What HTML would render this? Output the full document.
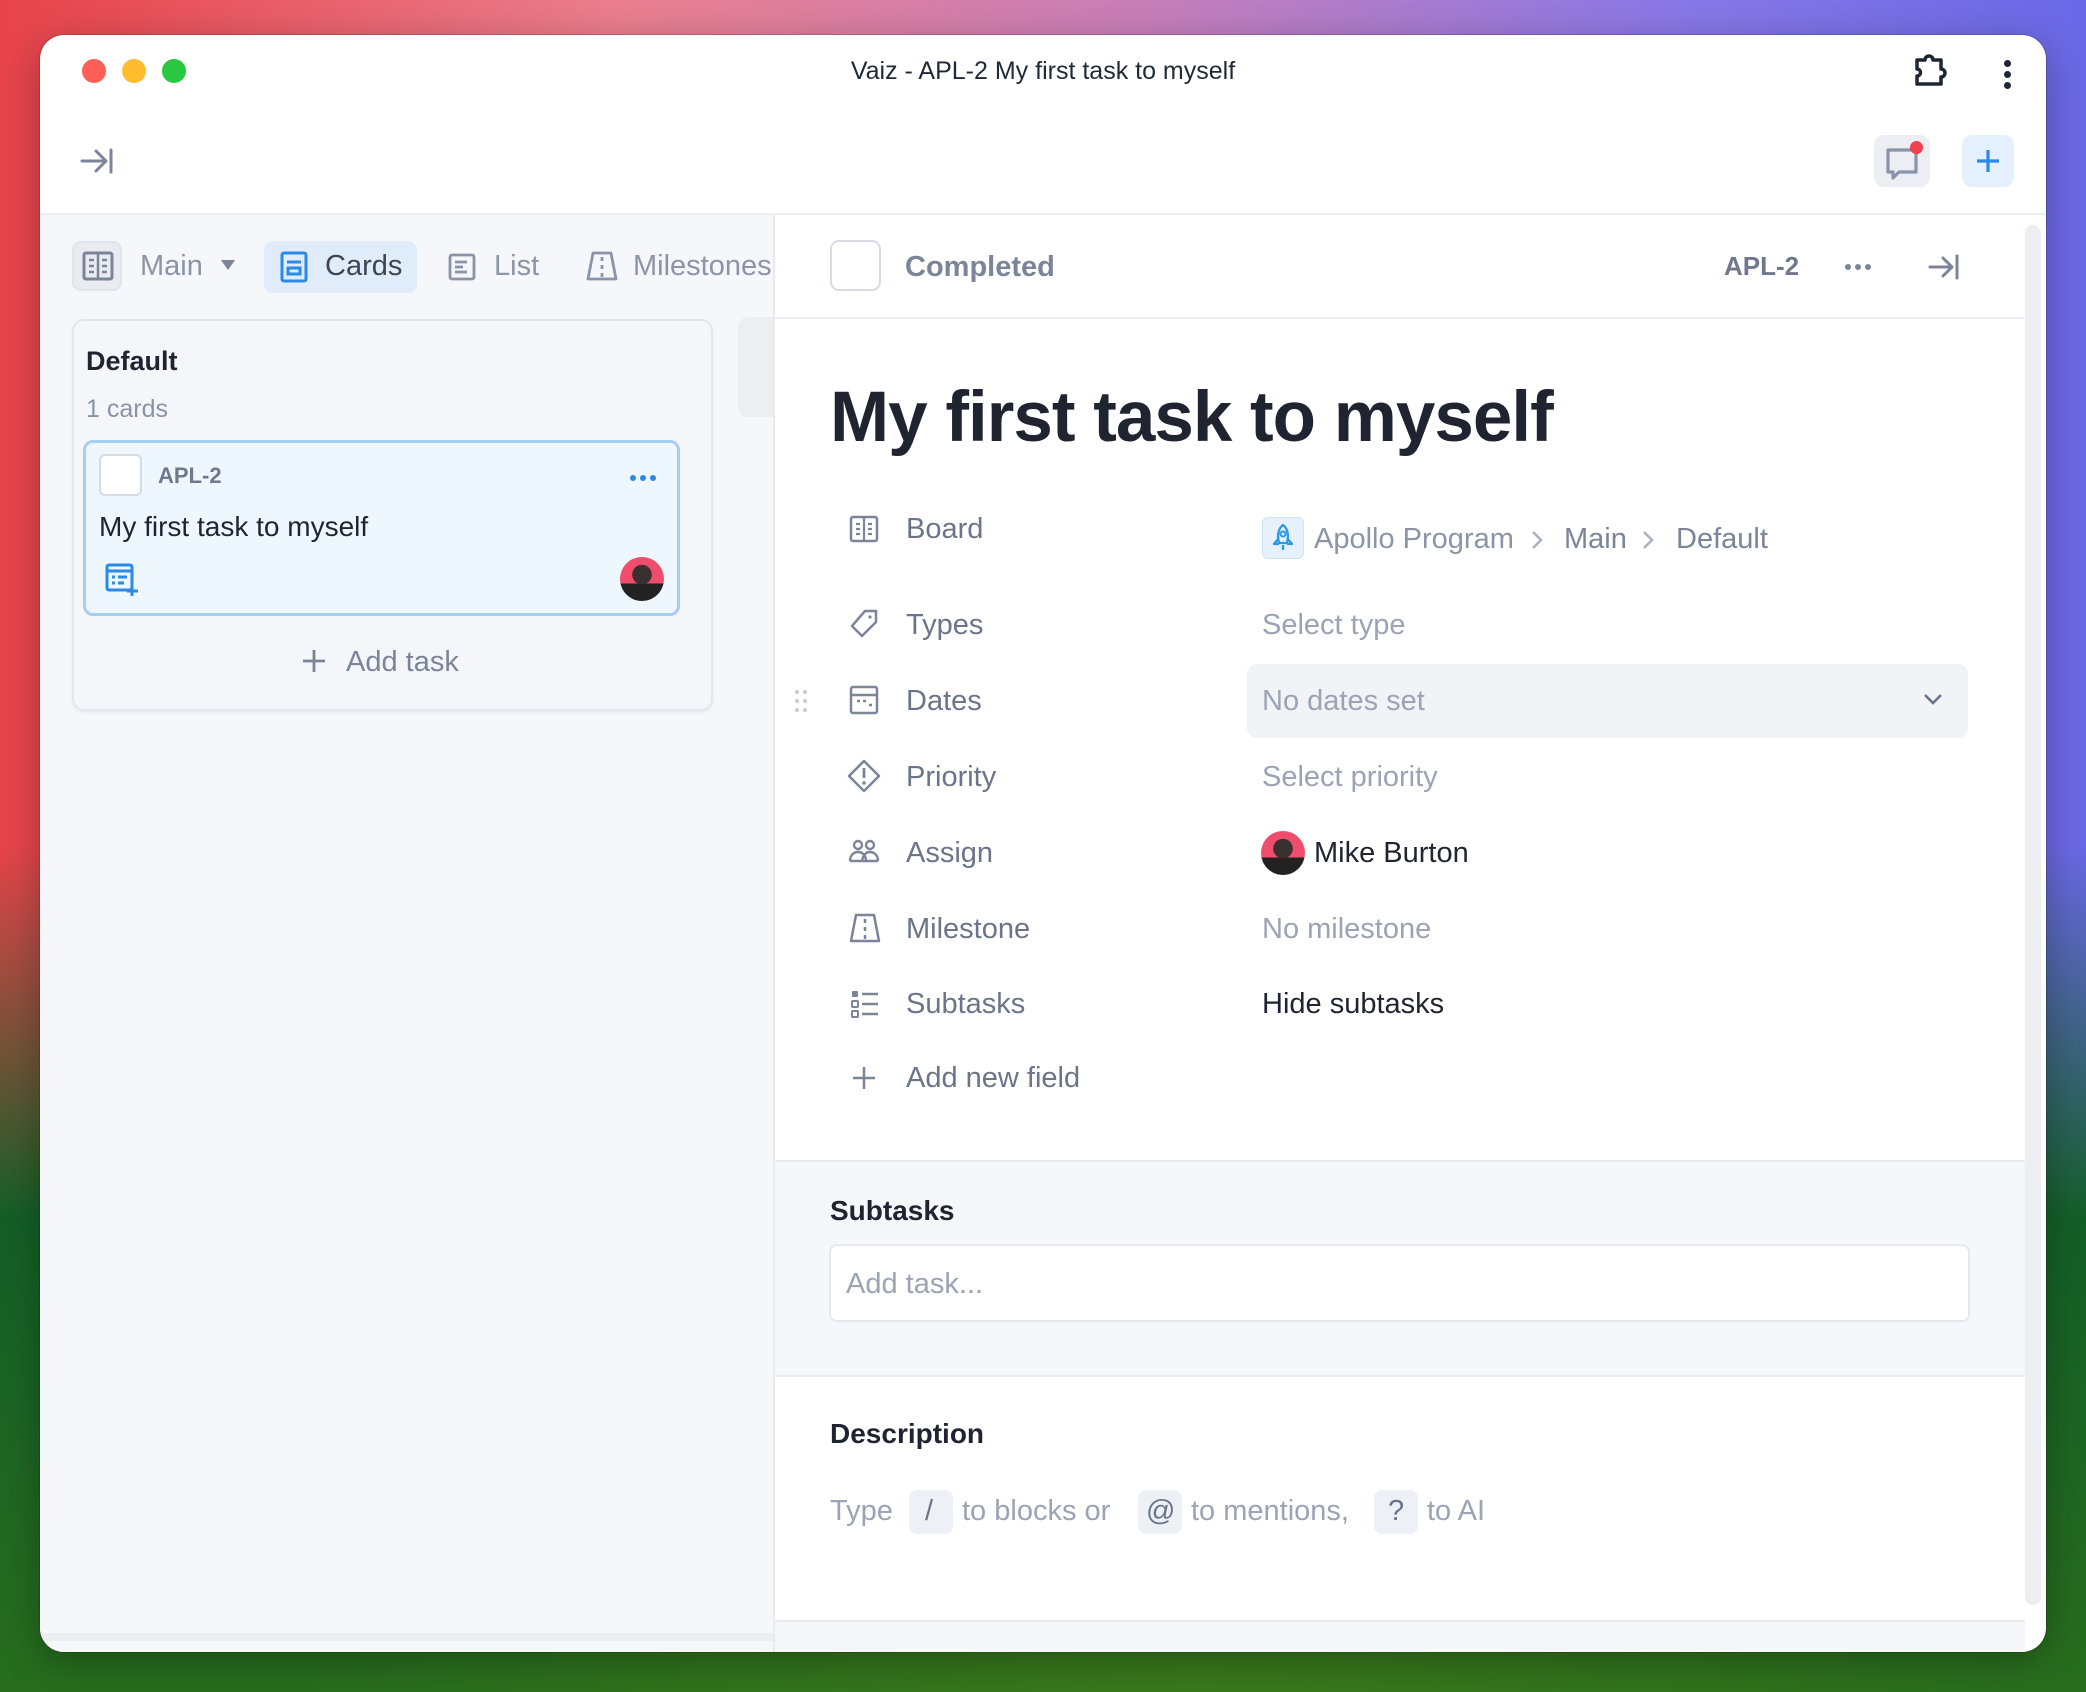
<!DOCTYPE html>
<html><head><meta charset="utf-8"><style>
*{box-sizing:border-box;margin:0;padding:0}
body{width:2086px;height:1692px;overflow:hidden;font-family:"Liberation Sans",sans-serif;position:relative;
background:
radial-gradient(ellipse 900px 700px at 1200px 1750px,#3c7a1c 0%,rgba(60,122,28,0) 100%),
linear-gradient(to bottom,rgba(0,0,0,0) 0%,rgba(0,0,0,0) 50%,rgba(20,95,40,1) 72%,rgba(40,110,30,1) 100%),
linear-gradient(to right,#e8434a 0%,#ea7f90 30%,#c77fb9 55%,#8a78e6 80%,#6a68e6 100%);}
.a{position:absolute}
.win{position:absolute;left:40px;top:35px;width:2006px;height:1617px;background:#fff;border-radius:24px;overflow:hidden;box-shadow:0 0 0 1px rgba(0,0,0,.15),0 10px 40px rgba(0,0,0,.3)}
.t{position:absolute;white-space:nowrap;line-height:1}
.lbl{color:#6b7489;font-size:29px}
.val{color:#9ba3b4;font-size:29px}
svg{position:absolute;overflow:visible}
</style></head><body>
<div class="win">
 <div class="a" style="left:42px;top:24px;width:24px;height:24px;border-radius:50%;background:#fe5f57"></div>
 <div class="a" style="left:82px;top:24px;width:24px;height:24px;border-radius:50%;background:#febc2e"></div>
 <div class="a" style="left:122px;top:24px;width:24px;height:24px;border-radius:50%;background:#28c840"></div>
 <div class="t" style="left:0;width:2006px;text-align:center;top:24px;font-size:25px;color:#1f2937">Vaiz - APL-2 My first task to myself</div>
 <svg style="left:1872px;top:18px" width="36" height="36" viewBox="0 0 36 36"><path d="M5 7h8a4 4 0 0 1 8 0h8v9a4 4 0 0 1 0 8v7H5v-8a3.5 3.5 0 0 0 0-7z" fill="none" stroke="#1e2533" stroke-width="3.5" stroke-linejoin="round"/></svg>
 <div class="a" style="left:1964px;top:25px;width:7px;height:7px;border-radius:50%;background:#1e2533"></div>
 <div class="a" style="left:1964px;top:36px;width:7px;height:7px;border-radius:50%;background:#1e2533"></div>
 <div class="a" style="left:1964px;top:47px;width:7px;height:7px;border-radius:50%;background:#1e2533"></div>
 <svg style="left:40px;top:112px" width="34" height="28" viewBox="0 0 34 28"><path d="M2 14h24M16 4l10 10-10 10M31 3v22" fill="none" stroke="#7b8499" stroke-width="3" stroke-linecap="round" stroke-linejoin="round"/></svg>
 <div class="a" style="left:1834px;top:100px;width:56px;height:52px;border-radius:10px;background:#eceef3"></div>
 <svg style="left:1845px;top:112px" width="36" height="34" viewBox="0 0 36 34"><path d="M3 3h28v22H14l-6 6v-6H3z" fill="none" stroke="#8a93a8" stroke-width="3.2" stroke-linejoin="round"/></svg>
 <div class="a" style="left:1870px;top:106px;width:13px;height:13px;border-radius:50%;background:#f0404a"></div>
 <div class="a" style="left:1922px;top:100px;width:52px;height:52px;border-radius:10px;background:#e4f0fd"></div>
 <svg style="left:1935px;top:113px" width="26" height="26" viewBox="0 0 26 26"><path d="M13 2v22M2 13h22" stroke="#2a8ae6" stroke-width="3.2"/></svg>
 <div class="a" style="left:0;top:178px;width:2006px;height:2px;background:#eceef2"></div>
 <div class="a" style="left:0;top:180px;width:733px;height:1437px;background:#f6f7fa"></div>
 <div class="a" style="left:32px;top:206px;width:50px;height:50px;border-radius:9px;background:#e9ebf0;border:2px solid #e1e4ea"></div>
 <svg style="left:42px;top:216px" width="32" height="30" viewBox="0 0 32 30"><rect x="2" y="2" width="28" height="26" rx="2" fill="none" stroke="#7b8499" stroke-width="3"/><path d="M16 2v26M7 9h5M7 15h5M7 21h5M20 9h5M20 15h5M20 21h5" stroke="#7b8499" stroke-width="2.5"/></svg>
 <div class="t lbl" style="left:100px;top:217px;color:#8c94a6">Main</div>
 <svg style="left:180px;top:224px" width="16" height="12" viewBox="0 0 16 12"><path d="M1 1h14L8 11z" fill="#7b8499"/></svg>
 <div class="a" style="left:224px;top:206px;width:153px;height:52px;border-radius:9px;background:#e0ecf9"></div>
 <svg style="left:240px;top:216px" width="28" height="32" viewBox="0 0 28 32"><rect x="2" y="2" width="24" height="28" rx="2" fill="none" stroke="#2a8ae6" stroke-width="3"/><path d="M7 11h14M8 17h12v6H8z" fill="none" stroke="#2a8ae6" stroke-width="3"/></svg>
 <div class="t" style="left:285px;top:217px;font-size:29px;color:#3d4555">Cards</div>
 <svg style="left:408px;top:218px" width="28" height="28" viewBox="0 0 28 28"><rect x="2" y="2" width="24" height="24" rx="2" fill="none" stroke="#8a93a8" stroke-width="2.8"/><path d="M7 9h12M7 14h8M7 19h12" stroke="#8a93a8" stroke-width="2.8"/></svg>
 <div class="t" style="left:454px;top:217px;font-size:29px;color:#8c94a6">List</div>
 <svg style="left:546px;top:216px" width="32" height="30" viewBox="0 0 32 30"><path d="M2 28L7 2h18l5 26zM16 6v4M16 14v4M16 22v4" fill="none" stroke="#8a93a8" stroke-width="2.8" stroke-linejoin="round"/></svg>
 <div class="t" style="left:593px;top:217px;font-size:29px;color:#8c94a6">Milestones</div>
 <div class="a" style="left:733px;top:180px;width:2px;height:1440px;background:#e8eaee"></div>
 <div class="a" style="left:32px;top:284px;width:641px;height:392px;border-radius:12px;background:#f5f6f9;border:2px solid #e4e6eb;box-shadow:0 2px 3px rgba(0,0,0,.05)"></div>
 <div class="a" style="left:698px;top:282px;width:35px;height:100px;border-radius:10px 0 0 10px;background:#eceef2"></div>
 <div class="t" style="left:46px;top:313px;font-size:27px;font-weight:bold;color:#1f2430">Default</div>
 <div class="t" style="left:46px;top:362px;font-size:25px;color:#8a93a5">1 cards</div>
 <div class="a" style="left:43px;top:405px;width:597px;height:176px;border-radius:10px;background:#eef6fe;border:3px solid #a6cdf3"></div>
 <div class="a" style="left:59px;top:419px;width:43px;height:42px;border-radius:6px;background:#fff;border:2px solid #d6dbe4"></div>
 <div class="t" style="left:118px;top:430px;font-size:22px;font-weight:bold;color:#6f788c">APL-2</div>
 <div class="a" style="left:590px;top:440px;width:6px;height:6px;border-radius:50%;background:#2a8ae6;box-shadow:10px 0 #2a8ae6,20px 0 #2a8ae6"></div>
 <div class="t" style="left:59px;top:478px;font-size:28px;color:#1f2430">My first task to myself</div>
 <svg style="left:65px;top:528px" width="34" height="34" viewBox="0 0 34 34"><rect x="2" y="2" width="25" height="25" rx="2" fill="none" stroke="#2a8ae6" stroke-width="3"/><path d="M2 8h25M7 14h3M13 14h9M7 20h3M13 20h6M27 22v11M22 28h11" stroke="#2a8ae6" stroke-width="3"/></svg>
 <div class="a" style="left:580px;top:522px;width:44px;height:44px;border-radius:50%;background:radial-gradient(circle at 50% 40%,#3a3030 0 28%,transparent 29%),linear-gradient(to bottom,transparent 60%,#222 60%),#f04c6c"></div>
 <svg style="left:262px;top:614px" width="24" height="24" viewBox="0 0 24 24"><path d="M12 1v22M1 12h22" stroke="#7b8499" stroke-width="2.8"/></svg>
 <div class="t" style="left:306px;top:613px;font-size:29px;color:#7b8499">Add task</div>
 <div class="a" style="left:0;top:1598px;width:733px;height:8px;background:#eceef2"></div>
 <!-- right panel -->
 <div class="a" style="left:1985px;top:190px;width:16px;height:1380px;border-radius:8px;background:#eceef2"></div>
 <div class="a" style="left:790px;top:205px;width:51px;height:51px;border-radius:9px;background:#fff;border:2px solid #d6dbe4"></div>
 <div class="t" style="left:865px;top:218px;font-size:29px;font-weight:bold;color:#7b8499">Completed</div>
 <div class="t" style="left:1684px;top:218px;font-size:26px;font-weight:bold;color:#6f788c">APL-2</div>
 <div class="a" style="left:1805px;top:229px;width:6px;height:6px;border-radius:50%;background:#7b8499;box-shadow:10px 0 #7b8499,20px 0 #7b8499"></div>
 <svg style="left:1888px;top:218px" width="32" height="28" viewBox="0 0 32 28"><path d="M2 14h22M15 5l9 9-9 9M29 3v22" fill="none" stroke="#7b8499" stroke-width="3" stroke-linecap="round" stroke-linejoin="round"/></svg>
 <div class="a" style="left:735px;top:282px;width:1250px;height:2px;background:#eceef2"></div>
 <div class="t" style="left:790px;top:347px;font-size:71px;font-weight:bold;color:#1f2430;letter-spacing:-1px">My first task to myself</div>

 <svg style="left:809px;top:480px" width="30" height="28" viewBox="0 0 30 28"><rect x="2" y="2" width="26" height="24" rx="2" fill="none" stroke="#7b8499" stroke-width="2.5"/><path d="M15 2v24M7 9h4M7 14h4M7 19h4M19 9h4M19 14h4M19 19h4" stroke="#7b8499" stroke-width="2.2"/></svg>
 <div class="t lbl" style="left:866px;top:480px">Board</div>
 <div class="a" style="left:1222px;top:482px;width:42px;height:42px;border-radius:6px;background:#e6f1fc;border:1px solid #cfe3f7"></div>
 <svg style="left:1230px;top:488px" width="26" height="30" viewBox="0 0 26 30"><path d="M13 2c5 4 6 10 4 18H9C7 12 8 6 13 2zM9 15l-5 6h5M17 15l5 6h-5M13 22v5" fill="none" stroke="#2a9ae6" stroke-width="2.3" stroke-linejoin="round"/><circle cx="13" cy="11" r="2.5" fill="none" stroke="#2a9ae6" stroke-width="2"/></svg>
 <div class="t val" style="left:1274px;top:490px;color:#8c94a6">Apollo Program</div>
 <svg style="left:1490px;top:494px" width="14" height="22" viewBox="0 0 14 22"><path d="M3 3l8 8-8 8" fill="none" stroke="#aab1bf" stroke-width="2.5"/></svg>
 <div class="t val" style="left:1524px;top:490px;color:#7b8499">Main</div>
 <svg style="left:1601px;top:494px" width="14" height="22" viewBox="0 0 14 22"><path d="M3 3l8 8-8 8" fill="none" stroke="#aab1bf" stroke-width="2.5"/></svg>
 <div class="t val" style="left:1636px;top:490px;color:#7b8499">Default</div>

 <svg style="left:809px;top:574px" width="30" height="30" viewBox="0 0 30 30"><path d="M16 2h11v11L13 27 3 17z" fill="none" stroke="#7b8499" stroke-width="2.5" stroke-linejoin="round"/><circle cx="21" cy="8" r="1.6" fill="#7b8499"/></svg>
 <div class="t lbl" style="left:866px;top:576px">Types</div>
 <div class="t val" style="left:1222px;top:576px">Select type</div>

 <div class="a" style="left:755px;top:655px;width:4px;height:4px;border-radius:50%;background:#c5cad4;box-shadow:8px 0 #c5cad4,0 9px #c5cad4,8px 9px #c5cad4,0 18px #c5cad4,8px 18px #c5cad4"></div>
 <svg style="left:809px;top:650px" width="30" height="30" viewBox="0 0 30 30"><rect x="2" y="2" width="26" height="26" rx="2" fill="none" stroke="#7b8499" stroke-width="2.5"/><path d="M2 10h26" stroke="#7b8499" stroke-width="2.5"/><path d="M8 16h3M14 16h3M20 20h3" stroke="#7b8499" stroke-width="2.5"/></svg>
 <div class="t lbl" style="left:866px;top:652px">Dates</div>
 <div class="a" style="left:1207px;top:629px;width:721px;height:74px;border-radius:10px;background:#f2f3f7"></div>
 <div class="t val" style="left:1222px;top:652px">No dates set</div>
 <svg style="left:1883px;top:657px" width="20" height="14" viewBox="0 0 20 14"><path d="M2 3l8 8 8-8" fill="none" stroke="#6b7489" stroke-width="2.6"/></svg>

 <svg style="left:807px;top:724px" width="34" height="34" viewBox="0 0 34 34"><path d="M17 2l15 15-15 15L2 17z" fill="none" stroke="#7b8499" stroke-width="2.5" stroke-linejoin="round"/><path d="M17 9v10" stroke="#7b8499" stroke-width="2.8"/><circle cx="17" cy="24" r="1.8" fill="#7b8499"/></svg>
 <div class="t lbl" style="left:866px;top:728px">Priority</div>
 <div class="t val" style="left:1222px;top:728px">Select priority</div>

 <svg style="left:808px;top:804px" width="32" height="26" viewBox="0 0 32 26"><circle cx="10" cy="6" r="4" fill="none" stroke="#7b8499" stroke-width="2.4"/><circle cx="22" cy="6" r="4" fill="none" stroke="#7b8499" stroke-width="2.4"/><path d="M2 22c0-6 4-9 8-9s8 3 8 9M14 22c1-6 4-9 8-9s8 3 8 9M2 22h28" fill="none" stroke="#7b8499" stroke-width="2.4"/></svg>
 <div class="t lbl" style="left:866px;top:804px">Assign</div>
 <div class="a" style="left:1221px;top:796px;width:44px;height:44px;border-radius:50%;background:radial-gradient(circle at 50% 40%,#3a3030 0 28%,transparent 29%),linear-gradient(to bottom,transparent 60%,#222 60%),#f04c6c"></div>
 <div class="t" style="left:1274px;top:804px;font-size:29px;color:#1f2430">Mike Burton</div>

 <svg style="left:809px;top:878px" width="32" height="30" viewBox="0 0 32 30"><path d="M2 28L7 2h18l5 26zM16 6v4M16 14v4M16 22v4" fill="none" stroke="#7b8499" stroke-width="2.5" stroke-linejoin="round"/></svg>
 <div class="t lbl" style="left:866px;top:880px">Milestone</div>
 <div class="t val" style="left:1222px;top:880px">No milestone</div>

 <svg style="left:810px;top:954px" width="30" height="30" viewBox="0 0 30 30"><rect x="2" y="2" width="6" height="6" rx="1" fill="#7b8499"/><rect x="2" y="12" width="6" height="6" rx="1" fill="none" stroke="#7b8499" stroke-width="2"/><rect x="2" y="22" width="6" height="6" rx="1" fill="none" stroke="#7b8499" stroke-width="2"/><path d="M12 5h16M12 15h16M12 25h16" stroke="#7b8499" stroke-width="2.5"/></svg>
 <div class="t lbl" style="left:866px;top:955px">Subtasks</div>
 <div class="t" style="left:1222px;top:955px;font-size:29px;color:#1f2430">Hide subtasks</div>

 <svg style="left:812px;top:1031px" width="24" height="24" viewBox="0 0 24 24"><path d="M12 1v22M1 12h22" stroke="#7b8499" stroke-width="2.5"/></svg>
 <div class="t lbl" style="left:866px;top:1029px">Add new field</div>

 <div class="a" style="left:735px;top:1125px;width:1250px;height:217px;background:#f6f7fa;border-top:2px solid #e8eaee;border-bottom:2px solid #e8eaee"></div>
 <div class="t" style="left:790px;top:1162px;font-size:28px;font-weight:bold;color:#1f2430">Subtasks</div>
 <div class="a" style="left:789px;top:1209px;width:1141px;height:78px;border-radius:8px;background:#fff;border:2px solid #e6e8ed"></div>
 <div class="t val" style="left:806px;top:1235px">Add task...</div>

 <div class="t" style="left:790px;top:1385px;font-size:28px;font-weight:bold;color:#1f2430">Description</div>
 <div class="a" style="left:869px;top:1455px;width:44px;height:44px;border-radius:8px;background:#edf0f5"></div>
 <div class="a" style="left:1098px;top:1455px;width:44px;height:44px;border-radius:8px;background:#edf0f5"></div>
 <div class="a" style="left:1334px;top:1455px;width:44px;height:44px;border-radius:8px;background:#edf0f5"></div>
 <div class="t val" style="left:790px;top:1462px">Type</div>
 <div class="t val" style="left:885px;top:1462px;color:#6b7489">/</div>
 <div class="t val" style="left:922px;top:1462px">to blocks or</div>
 <div class="t val" style="left:1106px;top:1462px;color:#6b7489">@</div>
 <div class="t val" style="left:1151px;top:1462px">to mentions,</div>
 <div class="t val" style="left:1348px;top:1462px;color:#6b7489">?</div>
 <div class="t val" style="left:1387px;top:1462px">to AI</div>
 <div class="a" style="left:735px;top:1585px;width:1250px;height:40px;background:#f6f7fa;border-top:2px solid #e8eaee"></div>
</div>
</body></html>
